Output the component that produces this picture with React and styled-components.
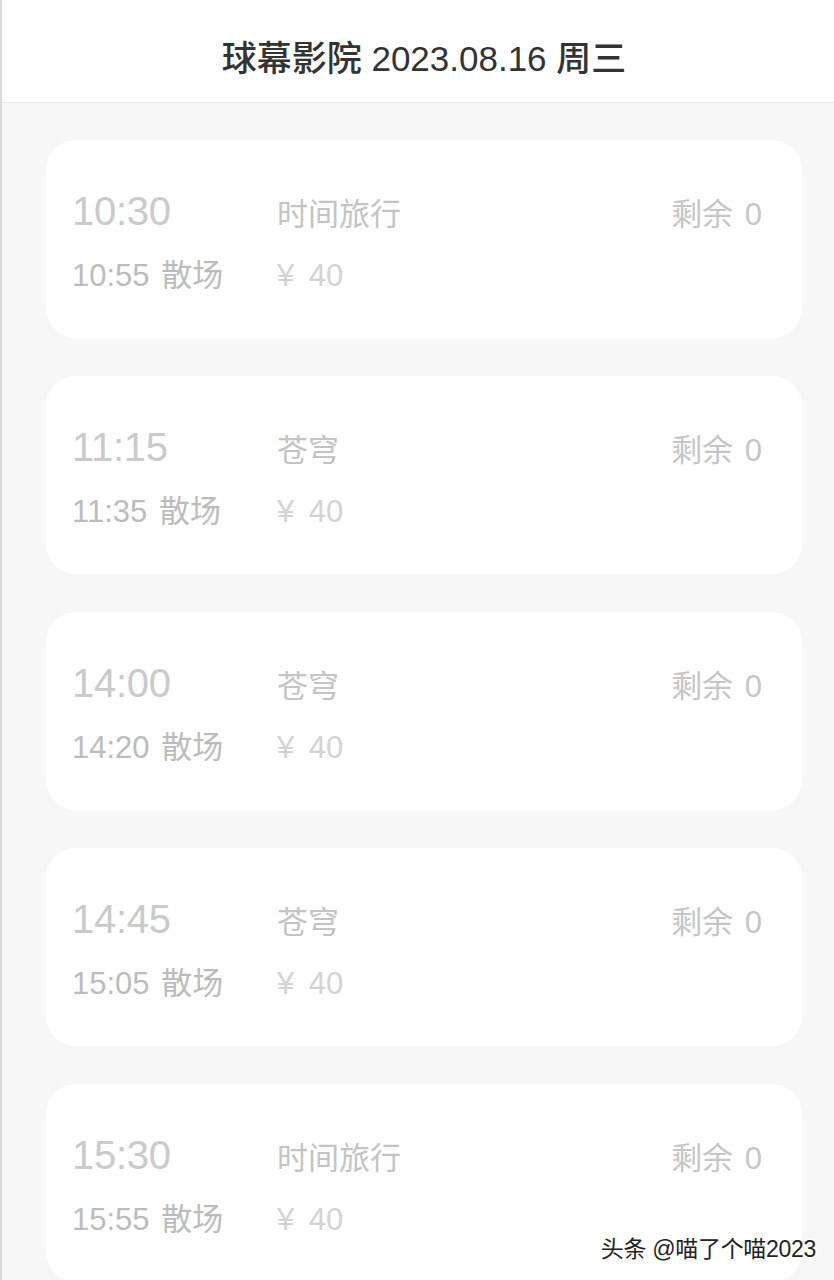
import React from 'react';
import styled, { createGlobalStyle } from 'styled-components';

const shows = [
  { start: '10:30', end: '10:55', title: '时间旅行', price: 40, left: 0 },
  { start: '11:15', end: '11:35', title: '苍穹', price: 40, left: 0 },
  { start: '14:00', end: '14:20', title: '苍穹', price: 40, left: 0 },
  { start: '14:45', end: '15:05', title: '苍穹', price: 40, left: 0 },
  { start: '15:30', end: '15:55', title: '时间旅行', price: 40, left: 0 },
];

const GlobalStyle = createGlobalStyle`
  html, body {
    margin: 0;
    padding: 0;
    background: #f7f7f7;
  }
  body {
    font-family: "Liberation Sans", "Noto Sans CJK SC", sans-serif;
  }
`;

const Page = styled.div`
  position: relative;
  height: 1280px;
  overflow: hidden;
  background: #f7f7f7;
  border-left: 2px solid #d9d9d9;
  box-sizing: border-box;
`;

const Header = styled.header`
  height: 102px;
  display: flex;
  align-items: center;
  justify-content: center;
  padding-left: 12px;
  background: #fff;
  border-bottom: 1px solid #e6e6e6;
`;

const Title = styled.h1`
  margin: 0;
  padding-top: 8px;
  font-size: 35px;
  font-weight: 500;
  color: #333;
`;

const List = styled.div`
  display: flex;
  flex-direction: column;
  gap: 38px;
  padding: 37px 32px 0 44px;
`;

const Card = styled.div`
  height: 198px;
  box-sizing: border-box;
  padding: 46px 40px 0 26px;
  background: #fff;
  border-radius: 30px;
  display: grid;
  grid-template-columns: 205px 1fr auto;
  grid-template-rows: 50px 40px;
  row-gap: 20px;
  align-items: baseline;
`;

const StartTime = styled.div`
  font-size: 40px;
  line-height: 50px;
  color: #cacaca;
  letter-spacing: -0.3px;
`;

const Movie = styled.div`
  font-size: 31px;
  color: #c4c4c4;
`;

const Remain = styled.div`
  font-size: 31px;
  color: #c6c6c6;
  word-spacing: 3px;
`;

const EndTime = styled.div`
  font-size: 31px;
  line-height: 40px;
  color: #bcbcbc;
  word-spacing: 3px;
`;

const Price = styled.div`
  font-size: 31px;
  color: #d3d3d3;
  grid-column: 2 / 4;
  word-spacing: 6px;
`;

const Watermark = styled.div`
  position: absolute;
  right: 18px;
  bottom: 16px;
  font-size: 23px;
  color: #222;
  letter-spacing: -0.3px;
  text-shadow: 1px 1px 0 #fff, -1px -1px 0 #fff, 1px -1px 0 #fff, -1px 1px 0 #fff;
`;

const ShowCard = ({ show }) => (
  <Card>
    <StartTime>{show.start}</StartTime>
    <Movie>{show.title}</Movie>
    <Remain>剩余 {show.left}</Remain>
    <EndTime>{show.end} 散场</EndTime>
    <Price>¥ {show.price}</Price>
  </Card>
);

export default function App() {
  return (
    <>
      <GlobalStyle />
      <Page>
        <Header>
          <Title>球幕影院 2023.08.16 周三</Title>
        </Header>
        <List>
          {shows.map((s, i) => (
            <ShowCard key={i} show={s} />
          ))}
        </List>
        <Watermark>头条 @喵了个喵2023</Watermark>
      </Page>
    </>
  );
}
